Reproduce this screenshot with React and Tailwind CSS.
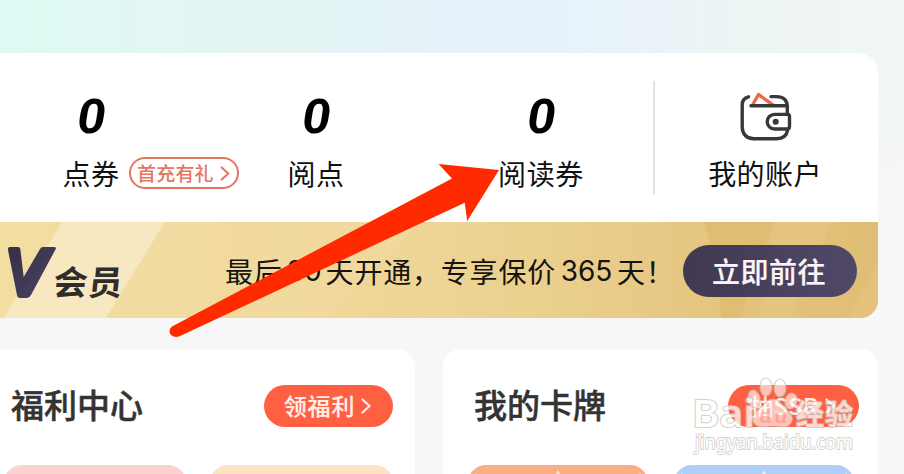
import React from 'react';

const cjk = "font-['Noto_Sans_CJK_SC',sans-serif]";

function Chevron({ className }) {
  return (
    <svg className={className} viewBox="0 0 10 16" fill="none" stroke="currentColor" strokeWidth="2.2" strokeLinecap="round" strokeLinejoin="round">
      <path d="M1.5 1.5 8.5 8l-7 6.5" />
    </svg>
  );
}

function Balance({ label, children }) {
  return (
    <div className="flex w-[225px] flex-col items-center pt-[39px]">
      <div className="h-[48px] scale-x-[1.06] pr-px font-[Roboto,sans-serif] text-[48px] leading-[49px] font-bold text-black italic">0</div>
      <div className="relative mt-[13px] -ml-px h-[40px] text-[28px] leading-[40px] tracking-[0.6px] whitespace-nowrap text-[#111]">
        {label}
        {children}
      </div>
    </div>
  );
}

function Wallet() {
  return (
    <svg className="-ml-[2px] h-[54px] w-[56px]" viewBox="738 89 56 54" fill="none" strokeWidth="3.4" strokeLinecap="round" strokeLinejoin="round">
      <path d="M752.5 105 758.5 94.5 773 105" stroke="#ee6950" />
      <g stroke="#38383a">
        <path d="M748.5 96.8c-4 1-6.3 3.8-6.3 8.2v22c0 7 4.500 11.700 11.500 11.700h23c6 0 10-3 11-9" />
        <path d="M771 96.600h5.500c7 0 10.600 3.600 10.800 10v7M751 105.700h35" />
        <path d="M787.800 114.400h-13.300a7.300 7.300 0 0 0 0 14.600h12.300c2.200 0 2.700-.8 2.700-2.500v-9.700c0-1.500-.3-2.400-1.700-2.400Z" />
      </g>
      <circle cx="775.700" cy="121.800" r="3" fill="#38383a" />
    </svg>
  );
}

function MemberBanner() {
  return (
    <div className="relative flex h-[96px] items-center overflow-hidden rounded-br-[18px] bg-gradient-to-r from-[#f3dea2] via-[#eed595] to-[#dfbd74]">
      <svg className="absolute inset-0 h-[96px] w-[878px]" viewBox="0 0 878 96">
        <path d="M62 0H165L106 96H4Z" fill="#f8e8c2" />
        <path d="M165 0H420L330 96H106Z" fill="#f3dca3" opacity=".5" />
        <path d="M704 0H774L760 96H721Q718 45 704 0Z" fill="#dfbe73" />
        <path d="M774 0H832L790 96H740Z" fill="#e6c782" opacity=".6" />
        <path d="M878 40V96H848Z" fill="#e5c37d" opacity=".8" />
      </svg>
      <div className="relative flex h-full w-full">
        <svg className="mt-[24px] ml-[7px] h-[54px] w-[50px] shrink-0" viewBox="7 246 50 54">
          <defs>
            <linearGradient id="vip" x1="0" y1="0" x2="1" y2="1">
              <stop offset="0" stopColor="#343044" />
              <stop offset="1" stopColor="#4c4368" />
            </linearGradient>
          </defs>
          <path d="M10 247h8q2 0 2.300 2l3.400 28L40 249q1-2 3-2h11q3 0 1.500 2.500L31 295q-1.500 3-4 3h-7q-2.500 0-3-3L8 250q-.5-3 2-3Z" fill="url(#vip)" />
        </svg>
        <span className="mt-[37px] -ml-[4px] w-[70px] -skew-x-6 text-[34px] leading-[44px] font-bold tracking-[1px] whitespace-nowrap text-[#302c2b]">会员</span>
        <div className="mt-[29px] ml-[102px] flex h-[40px] text-[28px] leading-[40px] tracking-[0.8px] whitespace-nowrap text-[#161310]">
          <span>最后</span>
          <span className="w-[43px] text-center font-[Inter,sans-serif] text-[28px] tracking-normal">30</span>
          <span>天开通，专享保价</span>
          <span className="w-[61px] text-center font-[Inter,sans-serif] text-[28px] tracking-normal">365</span>
          <span>天！</span>
        </div>
      </div>
      <button className="absolute top-[23px] left-[683px] h-[52px] w-[174px] rounded-full bg-gradient-to-r from-[#413950] to-[#504868] pr-[2px] text-center text-[28px] leading-[50px] font-medium tracking-[0.5px] text-[#fbf5fb] [-webkit-text-stroke:0.2px_#fbf5fb]">立即前往</button>
    </div>
  );
}

function Watermark() {
  return (
    <svg className="absolute top-[368px] left-[685px] h-[95px] w-[180px]" viewBox="685 368 180 95">
      <g fill="#fff" fillOpacity=".62" stroke="#c0baba" strokeOpacity=".65" strokeWidth="1.2">
        <ellipse cx="766" cy="387" rx="6" ry="9" />
        <ellipse cx="780" cy="388" rx="6" ry="9" />
        <ellipse cx="754" cy="399" rx="6" ry="9" transform="rotate(-12 754 399)" />
        <ellipse cx="791" cy="401" rx="6" ry="8" transform="rotate(15 791 401)" />
        <path d="M773 399c6 0 8 5 13 10 6 5 8 9 5 14-4 6-10 3-18 3s-15 3-19-3c-3-5-1-9 5-14 6-5 8-10 14-10Z" />
      </g>
      <g fill="#fff" stroke="#c6c1c1" strokeWidth="2" paintOrder="stroke" strokeLinejoin="round" opacity=".75">
        <text x="692" y="427" fontSize="37" fontWeight="600" textLength="63" lengthAdjust="spacingAndGlyphs" fontFamily="Open Sans, sans-serif">Bai</text>
        <text x="796" y="425" fontSize="28" fontWeight="700" textLength="57" fontFamily="Noto Sans CJK SC, sans-serif">经验</text>
        <text x="695" y="449" fontSize="19" textLength="158" lengthAdjust="spacingAndGlyphs" fontFamily="Noto Sans, sans-serif" strokeWidth="1.8">jingyan.baidu.com</text>
      </g>
      <text x="759" y="423" fontSize="21" fontWeight="700" textLength="28" fill="#f27f68" fillOpacity=".45" fontFamily="Liberation Sans, sans-serif">du</text>
    </svg>
  );
}

function FeatureCard({ title, action, className, children, actionClass }) {
  return (
    <section className={`relative h-[150px] overflow-hidden bg-white ${className}`}>
      <div className="flex items-start justify-between pt-[36px]">
        <h2 className="-mt-[2px] text-[33px] leading-[42px] font-medium whitespace-nowrap text-[#333] [-webkit-text-stroke:0.5px_#333]">{title}</h2>
        <button className={`flex h-[42px] items-center justify-center rounded-full bg-[#ff6042] pr-[2px] text-[23px] font-medium tracking-[0.8px] text-[#fff1e9] [-webkit-text-stroke:0.2px_#fff1e9] ${actionClass}`}>
          <span className="-mt-[3px] leading-[38px]">{action}</span>
          <Chevron className="ml-[6px] h-[16px] w-[10px]" />
        </button>
      </div>
      {children}
    </section>
  );
}

function Sparkles() {
  return (
    <svg className="h-[16px] w-[180px]" viewBox="0 0 180 16" fill="#fff" opacity=".65">
      <path d="m90 5 2 4 7 1-5 3 2 3H84l2-3-5-3 7-1ZM7 8l5 2 2 6H9ZM173 8l-5 2-2 6h5Z" />
    </svg>
  );
}

export default function App() {
  return (
    <main className={`relative h-[474px] w-[904px] overflow-hidden bg-[#f7f7f7] bg-[linear-gradient(180deg,transparent_0px,transparent_53px,#f7f7f7_230px),linear-gradient(90deg,#ddf9f2_0px,#e2f6f3_150px,#e4f4f3_300px,#e5f2fa_450px,#e7f2f9_600px,#edf5f4_760px,#f2f6f6_904px)] pt-[53px] ${cjk}`}>
      <section className="w-[878px]">
        <div className="flex h-[169px] rounded-tr-[20px] bg-white">
          <div className="-ml-[21px] flex shrink-0">
            <Balance label="点券">
              <span className="absolute top-[4px] left-[67px] flex h-[32px] w-[110px] items-center justify-center rounded-full border-2 border-[#e47561] pr-[2px] text-[19px] leading-[28px] font-medium tracking-[0.2px] text-[#e47561]">
                首充有礼
                <Chevron className="ml-[6px] h-[15px] w-[10px]" />
              </span>
            </Balance>
            <Balance label="阅点" />
            <Balance label="阅读券" />
          </div>
          <div className="mt-[28px] -ml-px h-[113px] w-[2px] shrink-0 bg-[#e2e2e2]" />
          <div className="flex flex-1 flex-col items-center pt-[36px]">
            <Wallet />
            <span className="mt-[10px] -ml-[3px] text-[28px] leading-[40px] tracking-[0.4px] whitespace-nowrap text-[#111]">我的账户</span>
          </div>
        </div>
        <MemberBanner />
      </section>

      <div className="mt-[31px] flex gap-[28px]">
        <FeatureCard title="福利中心" action="领福利" className="w-[415px] rounded-tr-[18px] pr-[22px] pl-[11px]" actionClass="w-[129px]">
          <div className="absolute top-[116px] left-[4px] h-[60px] w-[182px] rounded-[18px] bg-[#fbd2cd]" />
          <div className="absolute top-[116px] left-[210px] h-[60px] w-[183px] rounded-[18px] bg-[#fce4c2]" />
        </FeatureCard>
        <FeatureCard title="我的卡牌" action="抽SSR" className="w-[435px] rounded-t-[18px] pr-[19px] pl-[31px]" actionClass="w-[131px]">
          <div className="absolute top-[116px] left-[25px] h-[60px] w-[180px] rounded-[18px] bg-[#faae86]"><Sparkles /></div>
          <div className="absolute top-[116px] left-[231px] h-[60px] w-[180px] rounded-[18px] bg-[#b0cff8]"><Sparkles /></div>
        </FeatureCard>
      </div>

      <Watermark />
      <svg className="pointer-events-none absolute inset-0 h-[474px] w-[904px]" viewBox="0 0 904 474">
        <path d="M499 170 438.500 164 452 178.500 172 326.500Q168 330 170.500 334.500 173.500 338 179 336.500L464.700 202.700 467.200 221Z" fill="#ff2a00" />
      </svg>
    </main>
  );
}
